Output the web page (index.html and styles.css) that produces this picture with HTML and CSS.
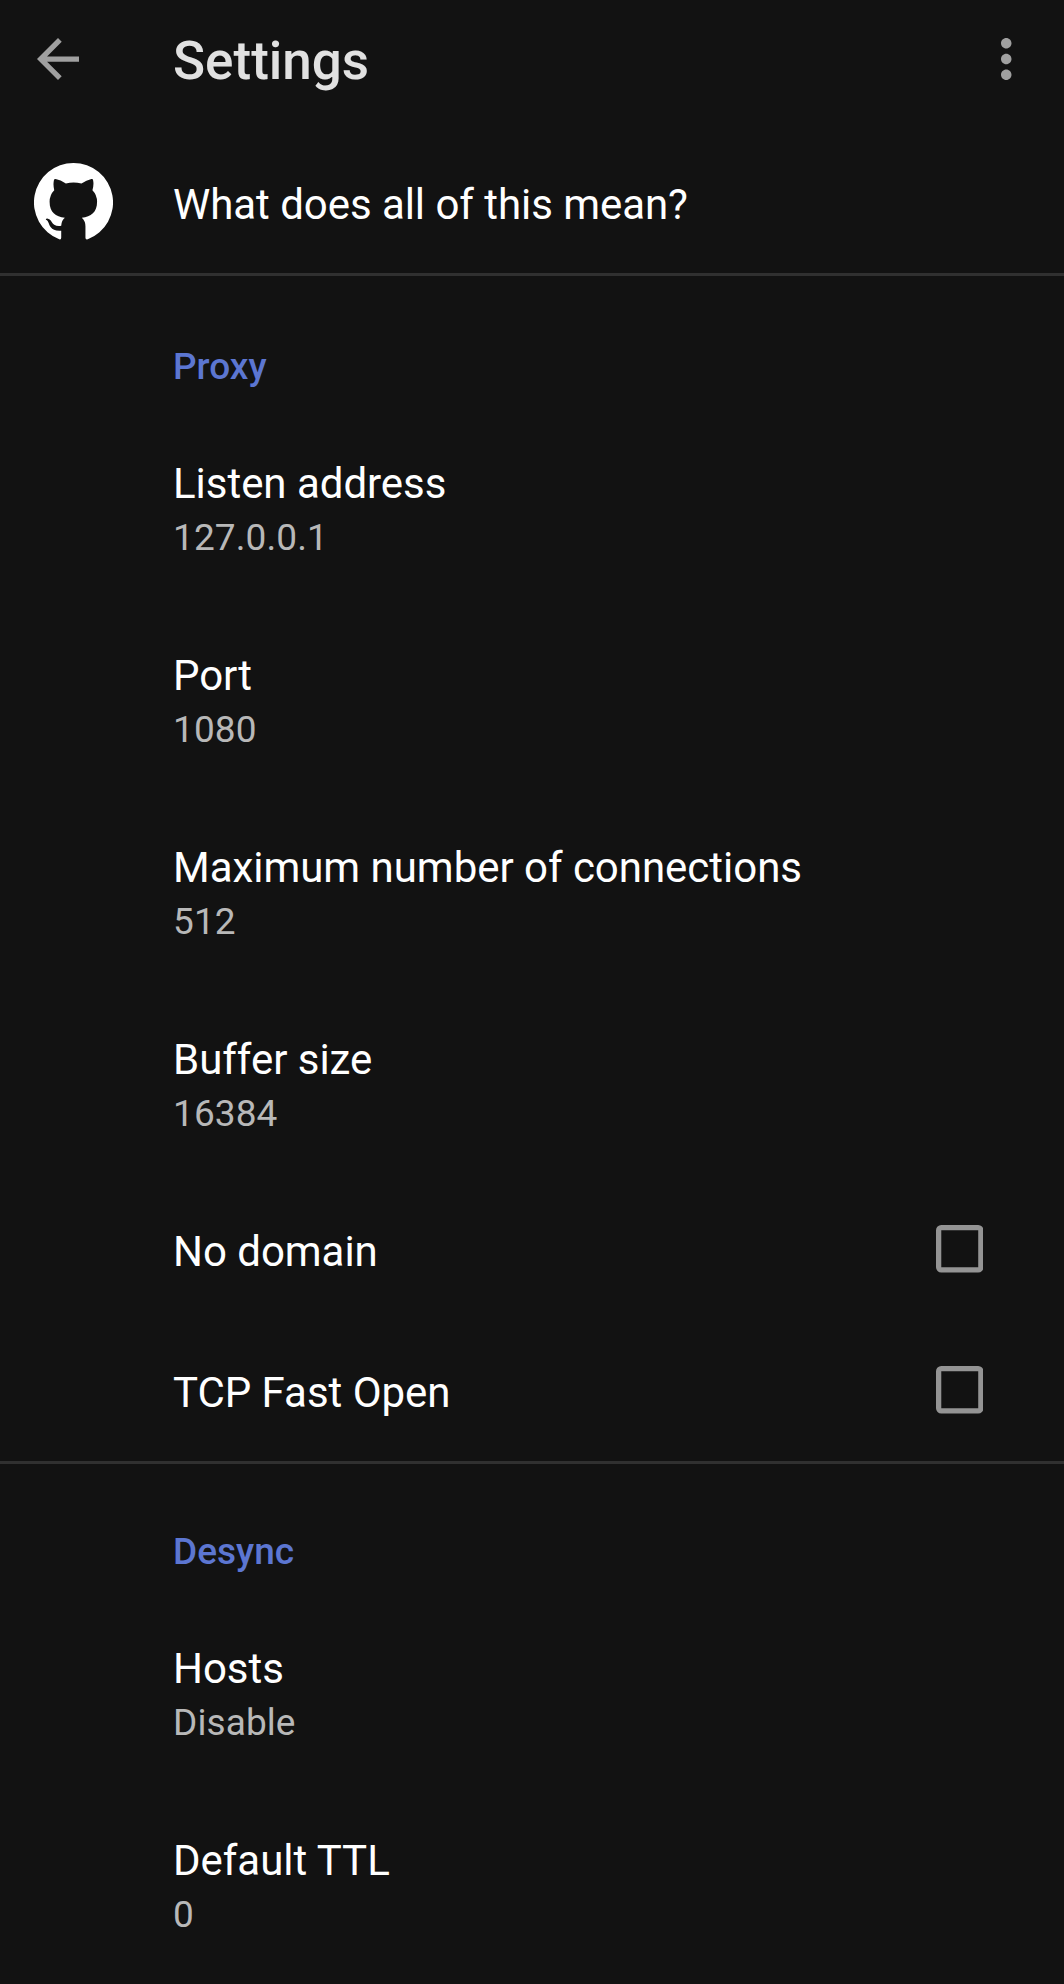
FILE: index.html
```html
<!DOCTYPE html>
<html lang="en">
<head>
<meta charset="utf-8">
<title>Settings</title>
<link rel="stylesheet" href="styles.css">
</head>
<body>
<header class="toolbar">
  <svg class="back" viewBox="4 4 16 16" aria-label="Back"><path d="M20 11H7.83l5.59-5.59L12 4l-8 8 8 8 1.41-1.41L7.83 13H20v-2z"/></svg>
  <h1 class="heading"><span>Settings</span></h1>
  <svg class="more" viewBox="10 4 4 16" aria-label="More options"><path d="M12 8c1.1 0 2-.9 2-2s-.9-2-2-2-2 .9-2 2 .9 2 2 2zm0 2c-1.1 0-2 .9-2 2s.9 2 2 2 2-.9 2-2-.9-2-2-2zm0 6c-1.1 0-2 .9-2 2s.9 2 2 2 2-.9 2-2-.9-2-2-2z"/></svg>
</header>
<main>
  <section class="about">
    <div class="row single">
      <svg class="github" viewBox="12 14 238 238"><path d="M131 14A119 119 0 0 0 88 244Q94 246 94 239V218C77 219 69 216 62 207C56 199 57 189 48 185Q47 181 52 181C64 183 65 195 73 200Q81 205 94 203Q95 187 105 179C77 176 59 163 59 131Q59 110 73 96Q69 80 72 66Q72 62 77 62Q92 64 108 76Q131 70 155 76Q170 65 185 62Q190 61 190 66Q193 80 188 96Q202 110 202 131C202 163 184 176 156 179Q167 189 167 205V239Q167 246 174 244A119 119 0 0 0 131 14Z"/></svg>
      <div class="title">What does all of this mean?</div>
    </div>
  </section>
  <section>
    <h2 class="category">Proxy</h2>
    <div class="row"><div class="title">Listen address</div><div class="summary">127.0.0.1</div></div>
    <div class="row"><div class="title">Port</div><div class="summary">1080</div></div>
    <div class="row"><div class="title">Maximum number of connections</div><div class="summary">512</div></div>
    <div class="row"><div class="title">Buffer size</div><div class="summary">16384</div></div>
    <div class="row single"><div class="title">No domain</div><svg class="checkbox" viewBox="0 0 18 18" role="checkbox" aria-checked="false"><rect x="1" y="1" width="16" height="16" rx="1"/></svg></div>
    <div class="row single"><div class="title">TCP Fast Open</div><svg class="checkbox" viewBox="0 0 18 18" role="checkbox" aria-checked="false"><rect x="1" y="1" width="16" height="16" rx="1"/></svg></div>
  </section>
  <section>
    <h2 class="category divided">Desync</h2>
    <div class="row"><div class="title">Hosts</div><div class="summary">Disable</div></div>
    <div class="row"><div class="title">Default TTL</div><div class="summary">0</div></div>
  </section>
</main>
</body>
</html>
```
FILE: styles.css
```css
* { box-sizing: border-box; }

body {
  margin: 0;
  height: 1984px;
  overflow: hidden;
  background: #121212;
  color: #fff;
  font-family: Roboto, "Liberation Sans", sans-serif;
}

.toolbar {
  display: flex;
  align-items: flex-start;
  height: 132px;
  padding: 30px 52.5px 0 36.5px;
}

.back { width: 42px; height: 42px; margin-top: 7.5px; fill: #a0a0a0; }

.heading {
  flex: 1;
  margin: 0 0 0 94.5px;
  font-size: 53px;
  line-height: 63px;
  font-weight: 500;
  color: #e1e1e1;
}

.more { width: 10.5px; height: 42px; margin-top: 7.5px; fill: #a0a0a0; }

.about { border-bottom: 3px solid #303030; }

.row { height: 192px; padding: 48px 81px 0 173px; }

.single {
  display: flex;
  align-items: flex-start;
  justify-content: space-between;
  height: 141px;
}

.about .single { justify-content: flex-start; padding-left: 34px; }

.about .title { letter-spacing: -0.05px; }

.github { width: 79px; height: 79px; margin: -17px 60px 0 0; fill: #fff; }

.title { font-size: 42px; line-height: 50px; letter-spacing: -0.03px; }

.summary {
  margin-top: 7px;
  font-size: 37px;
  line-height: 44px;
  letter-spacing: 0.1px;
  color: #b8b8b8;
}

.category {
  height: 135px;
  margin: 0;
  padding: 69px 0 0 173px;
  font-size: 37px;
  line-height: 44px;
  font-weight: 500;
  color: #5c76d1;
}

.divided { border-top: 3px solid #303030; padding-top: 66px; }

.checkbox {
  width: 47.5px;
  height: 47.5px;
  margin-top: -2px;
  fill: none;
  stroke: #949494;
  stroke-width: 2;
}
```
